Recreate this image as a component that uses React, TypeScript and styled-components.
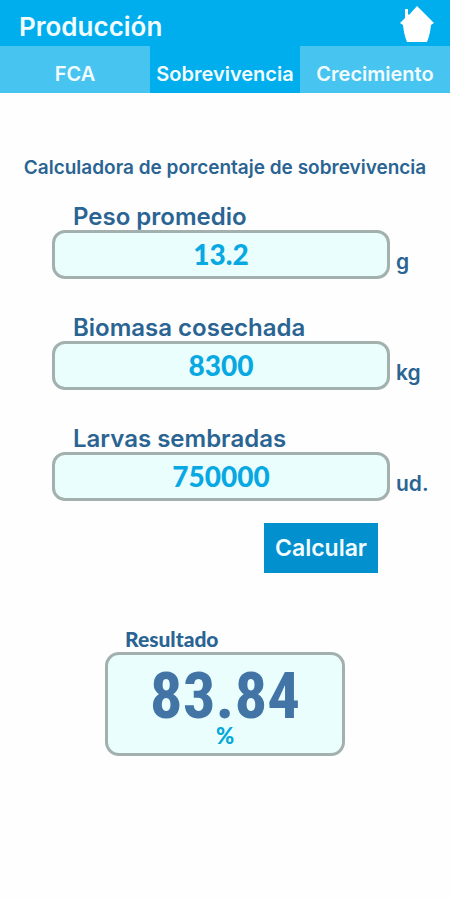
import { useState } from "react";
import type { FormEvent } from "react";
import styled, { createGlobalStyle } from "styled-components";

const GlobalStyle = createGlobalStyle`
  *, *::before, *::after { box-sizing: border-box; }
  body {
    margin: 0;
    background: #fefefe;
    color: #2a6493;
    font-family: Inter, "Liberation Sans", sans-serif;
    font-weight: 600;
  }
  button, input { font: inherit; }
`;

const Header = styled.header`
  display: flex;
  align-items: flex-start;
  justify-content: space-between;
  height: 46px;
  padding: 6px 16px 0 19px;
  background: #00aeed;
  color: #f2fcff;
`;

const Title = styled.h1`
  margin: 0;
  padding-top: 5px;
  font-size: 26px;
  line-height: 32px;
  font-weight: 600;
`;

const HomeButton = styled.button`
  display: flex;
  padding: 0;
  border: 0;
  background: none;
  color: #ffffff;
  cursor: pointer;
`;

const Tabs = styled.nav`
  display: grid;
  grid-template-columns: repeat(3, 1fr);
`;

const Tab = styled.button<{ $active: boolean }>`
  height: 47px;
  padding: 8px 0 0;
  border: 0;
  background: ${({ $active }) => ($active ? "#00aeed" : "#48c4f1")};
  color: #f2fcff;
  font-size: 20px;
  line-height: 24px;
  cursor: pointer;
`;

const Form = styled.form`
  display: flex;
  flex-direction: column;
  padding-top: 62px;
`;

const Heading = styled.h2`
  margin: 0 0 22px;
  font-size: 19px;
  line-height: 26px;
  font-weight: 600;
  text-align: center;
`;

const Field = styled.div`
  display: grid;
  grid-template-columns: 1fr 46px;
  column-gap: 6px;
  padding: 0 8px 0 52px;
  margin-bottom: 35px;
`;

const Label = styled.label`
  grid-column: 1 / -1;
  padding-left: 21px;
  font-size: 24px;
  line-height: 27px;
`;

const NumberInput = styled.input`
  width: 100%;
  min-width: 0;
  height: 49px;
  padding: 0 0 2px;
  border: 3px solid #a2b1ae;
  border-radius: 13px;
  background: #eafffd;
  color: #08a8e3;
  font-family: Lato, sans-serif;
  font-size: 28px;
  font-weight: 900;
  text-align: center;
`;

const Unit = styled.span`
  align-self: end;
  padding-bottom: 4px;
  font-size: 21px;
  line-height: 26px;
`;

const Submit = styled.button`
  align-self: flex-end;
  height: 50px;
  margin-right: 72px;
  margin-top: -13px;
  padding: 0 11px;
  border: 0;
  background: #0290ce;
  color: #f2fcff;
  font-size: 23px;
  cursor: pointer;
`;

const Result = styled.section`
  width: 240px;
  margin: 52px auto 0;
`;

const ResultTitle = styled.h3`
  margin: 0;
  padding-left: 20px;
  font-family: Lato, sans-serif;
  font-size: 21px;
  line-height: 27px;
  font-weight: 900;
`;

const ResultBox = styled.output`
  display: flex;
  flex-direction: column;
  align-items: center;
  height: 104px;
  padding-top: 12px;
  border: 3px solid #a2b1ae;
  border-radius: 14px;
  background: #eafffd;
`;

const ResultValue = styled.span`
  color: #4275a6;
  font-family: "Roboto Condensed", Roboto, sans-serif;
  font-size: 65px;
  line-height: 58px;
  font-weight: 700;
`;

const Percent = styled.span`
  color: #08a8d8;
  font-family: Lato, sans-serif;
  font-size: 22px;
  line-height: 22px;
  font-weight: 900;
`;

const tabs = ["FCA", "Sobrevivencia", "Crecimiento"];

const fields = [
  { id: "peso", label: "Peso promedio", unit: "g" },
  { id: "biomasa", label: "Biomasa cosechada", unit: "kg" },
  { id: "larvas", label: "Larvas sembradas", unit: "ud." },
] as const;

const HomeIcon = () => (
  <svg width="34" height="37" viewBox="0 0 34 37" fill="currentColor" aria-hidden="true">
    <path d="M5 3h3v5l1 1 8-9 17 17-3 2q-1 10-4 17H7Q4 29 3 19l-3-2 5-5z" />
  </svg>
);

export default function App() {
  const [active, setActive] = useState("Sobrevivencia");
  const [values, setValues] = useState({ peso: "13.2", biomasa: "8300", larvas: "750000" });
  const [result, setResult] = useState("83.84");

  const calculate = (event: FormEvent) => {
    event.preventDefault();
    const animals = (Number(values.biomasa) * 1000) / Number(values.peso);
    const rate = (animals / Number(values.larvas)) * 100;
    setResult(Number.isFinite(rate) ? rate.toFixed(2) : "0.00");
  };

  return (
    <>
      <GlobalStyle />
      <Header>
        <Title>Producción</Title>
        <HomeButton type="button" aria-label="Inicio">
          <HomeIcon />
        </HomeButton>
      </Header>
      <Tabs>
        {tabs.map((name) => (
          <Tab key={name} type="button" $active={name === active} onClick={() => setActive(name)}>
            {name}
          </Tab>
        ))}
      </Tabs>
      <main>
        <Form onSubmit={calculate}>
          <Heading>Calculadora de porcentaje de sobrevivencia</Heading>
          {fields.map(({ id, label, unit }) => (
            <Field key={id}>
              <Label htmlFor={id}>{label}</Label>
              <NumberInput
                id={id}
                inputMode="decimal"
                value={values[id]}
                onChange={(event) => setValues({ ...values, [id]: event.target.value })}
              />
              <Unit>{unit}</Unit>
            </Field>
          ))}
          <Submit type="submit">Calcular</Submit>
        </Form>
        <Result>
          <ResultTitle>Resultado</ResultTitle>
          <ResultBox>
            <ResultValue>{result}</ResultValue>
            <Percent>%</Percent>
          </ResultBox>
        </Result>
      </main>
    </>
  );
}
